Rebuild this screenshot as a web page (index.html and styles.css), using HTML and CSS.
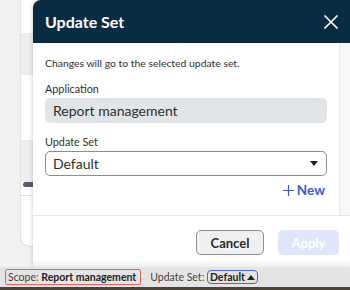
FILE: index.html
```html
<!DOCTYPE html>
<html lang="en">
<head>
    <meta charset="UTF-8">
    <title>Update Set</title>
    <link rel="stylesheet" href="styles.css">
</head>
<body>

<div class="workspace">
    <div class="list-card">
        <div class="row"></div>
        <div class="row shaded"></div>
        <div class="row"></div>
        <div class="row shaded"></div>
        <div class="scroll-thumb"></div>
        <div class="row divided"></div>
    </div>

    <div class="modal">
        <div class="modal-header">
            <span class="modal-title">Update Set</span>
            <svg class="close-icon" width="16" height="16" viewBox="0 0 16 16">
                <path d="M1.5 1.5 L14.5 14.5 M14.5 1.5 L1.5 14.5" stroke="#ffffff" stroke-width="1.7" fill="none"/>
            </svg>
        </div>
        <div class="modal-body">
            <div class="modal-content">
                <p class="hint">Changes will go to the selected update set.</p>
                <label class="field-label">Application</label>
                <div class="readonly-input">Report management</div>
                <label class="field-label">Update Set</label>
                <div class="select-box">
                    <span>Default</span>
                    <span class="caret"></span>
                </div>
                <div class="new-link">
                    <svg class="plus" width="11" height="11" viewBox="0 0 11 11">
                        <path d="M5.5 0 V11 M0 5.5 H11" stroke="#3c5ad6" stroke-width="1.2" fill="none"/>
                    </svg>New
                </div>
            </div>
            <div class="gutter"></div>
        </div>
        <div class="modal-footer">
            <button class="btn btn-cancel">Cancel</button>
            <button class="btn btn-apply">Apply</button>
        </div>
    </div>
</div>

<div class="status-bar">
    <div class="scope-box">Scope: <b>Report management</b></div>
    <div class="update-set">Update Set: <span class="set-chip">Default <span class="up-caret"></span></span></div>
</div>
<div class="bottom-edge"></div>

</body>
</html>
```

FILE: styles.css
```css
body {
    font-family: Lato, "Open Sans", sans-serif;
    margin: 0;
    padding: 0;
    width: 350px;
    height: 290px;
    overflow: hidden;
    background-color: #f1f1f1;
    color: #2e2e2e;
}

.workspace {
    position: relative;
    height: 267px;
    overflow: hidden;
}

.list-card {
    margin-left: 20px;
    width: 80px;
    height: 246px;
    background-color: #ffffff;
    border: 1px solid #e2e2e2;
    border-top: none;
    border-radius: 0 0 0 10px;
}

.row {
    height: 33px;
}

.row.shaded {
    height: 42px;
    background-color: #eeeeee;
}

.row:nth-child(3) {
    height: 65px;
}

.scroll-thumb {
    margin-left: 2px;
    height: 5px;
    border-radius: 3px;
    background-color: #5b5e6a;
}

.row.divided {
    height: 8px;
    border-bottom: 1px solid #e2e2e2;
}

.modal {
    position: absolute;
    left: 33px;
    top: 0;
    width: 330px;
    height: 267px;
    background-color: #ffffff;
    border-radius: 8px 0 0 0;
    box-shadow: -1px 0 4px rgba(0, 0, 0, 0.15);
    display: flex;
    flex-direction: column;
    overflow: hidden;
}

.modal-header {
    height: 43px;
    flex-shrink: 0;
    background-color: #0a2c43;
    display: flex;
    align-items: center;
    padding: 0 12px;
    box-sizing: border-box;
    width: 317px;
}

.modal-title {
    color: #ffffff;
    font-size: 16px;
    font-weight: bold;
    flex: 1;
}

.close-icon {
    margin-right: -1px;
}

.modal-body {
    display: flex;
    height: 172px;
    flex-shrink: 0;
    border-bottom: 1px solid #e6e6e6;
}

.modal-content {
    width: 307px;
    padding: 0 12px 0 12px;
    box-sizing: border-box;
    border-right: 1px solid #e8e8e8;
}

.gutter {
    width: 10px;
    background-color: #f7f7f7;
}

.hint {
    font-size: 10.4px;
    margin: 14px 0 13px 0;
}

.field-label {
    display: block;
    font-size: 10.8px;
    margin-bottom: 3px;
}

.readonly-input {
    height: 25px;
    line-height: 25px;
    background-color: #e2e5e8;
    border-radius: 5px;
    font-size: 14px;
    padding-left: 8px;
    margin-bottom: 12px;
}

.select-box {
    height: 25px;
    box-sizing: border-box;
    border: 1px solid #8c8c8c;
    border-radius: 5px;
    font-size: 14px;
    padding: 0 8px 0 7px;
    display: flex;
    align-items: center;
    justify-content: space-between;
}

.caret {
    width: 0;
    height: 0;
    border-left: 4px solid transparent;
    border-right: 4px solid transparent;
    border-top: 5px solid #1f1f1f;
}

.new-link {
    display: flex;
    justify-content: flex-end;
    align-items: center;
    color: #3c5ad6;
    font-size: 13.5px;
    font-weight: bold;
    margin-top: 6px;
    padding-right: 2px;
}

.new-link .plus {
    margin-right: 3px;
}

.modal-footer {
    flex: 1;
    display: flex;
    justify-content: flex-end;
    align-items: center;
    gap: 14px;
    padding-right: 11px;
    padding-top: 2px;
    width: 317px;
    box-sizing: border-box;
    background: linear-gradient(#ffffff 85%, #eeeeee);
}

.btn {
    height: 25px;
    border-radius: 5px;
    font-family: Lato, sans-serif;
    font-size: 13px;
    font-weight: bold;
    padding: 0;
}

.btn-cancel {
    width: 68px;
    background-color: #eef0f1;
    border: 1px solid #8e8e8e;
    color: #2b2b2b;
}

.btn-apply {
    width: 61px;
    background-color: #dfe5fb;
    border: none;
    color: #ffffff;
}

.status-bar {
    height: 20px;
    background-color: #e4e4e4;
    display: flex;
    align-items: center;
    font-size: 10.5px;
    color: #444444;
    padding-left: 5px;
    gap: 9px;
}

.scope-box {
    border: 1px solid #e4645a;
    border-radius: 2px;
    padding: 0 4px 0 2px;
    height: 14px;
    line-height: 14px;
}

.scope-box b,
.set-chip {
    color: #222222;
    font-weight: bold;
}

.set-chip {
    border: 1px solid #4a63d8;
    border-radius: 4px;
    padding: 0 2px 0 2px;
}

.up-caret {
    display: inline-block;
    width: 0;
    height: 0;
    border-left: 4px solid transparent;
    border-right: 4px solid transparent;
    border-bottom: 5px solid #222222;
    vertical-align: 1px;
}

.bottom-edge {
    height: 3px;
    background-color: #4a4438;
}
```
